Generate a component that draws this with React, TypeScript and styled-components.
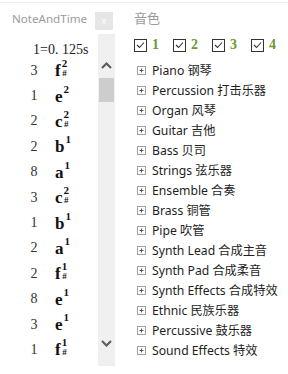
import React from "react";
import styled, { createGlobalStyle } from "styled-components";

const GlobalStyle = createGlobalStyle`
  html, body {
    margin: 0;
    padding: 0;
    background: #ffffff;
  }
`;

const Root = styled.div`
  display: flex;
  width: 288px;
  height: 371px;
  margin-top: 2px;
  border-top: 1px solid #f0f0f0;
  background: #ffffff;
  overflow: hidden;
`;

const LeftPanel = styled.div`
  display: flex;
  flex-direction: column;
  width: 120px;
  flex-shrink: 0;
`;

const LeftHeader = styled.div`
  display: flex;
  align-items: center;
  height: 31px;
  padding-left: 12px;
`;

const HeaderTitle = styled.span`
  font-family: "Noto Sans", sans-serif;
  font-size: 11.6px;
  color: #9b9b9b;
  white-space: nowrap;
`;

const CloseButton = styled.div`
  display: flex;
  flex-shrink: 0;
  align-items: center;
  justify-content: center;
  width: 18px;
  height: 18px;
  margin-left: auto;
  margin-right: 7px;
  margin-top: 4px;
  background: #e6e6e6;
  color: #ffffff;
  font-family: "Noto Sans", sans-serif;
  font-size: 9px;
`;

const LeftBody = styled.div`
  display: flex;
  height: 332px;
`;

const NoteList = styled.div`
  flex: 1;
  padding-top: 8px;
`;

const Unit = styled.div`
  height: 16px;
  line-height: 16px;
  padding-left: 33px;
  font-family: "Liberation Serif", serif;
  font-size: 14px;
  color: #222;
`;

const NoteRow = styled.div`
  display: flex;
  align-items: center;
  height: 25.4px;
`;

const Duration = styled.span`
  width: 12px;
  margin-left: 28px;
  text-align: center;
  font-family: "Liberation Serif", serif;
  font-size: 14px;
  color: #333;
`;

const Pitch = styled.span`
  display: inline-flex;
  align-items: center;
  margin-left: 15px;
`;

const Letter = styled.span`
  font-family: "Liberation Serif", serif;
  font-weight: 700;
  font-size: 17px;
  line-height: 1;
  color: #111;
`;

const Marks = styled.span`
  display: inline-flex;
  flex-direction: column;
  align-items: center;
  margin-left: 1px;
  margin-top: -5px;
  font-family: "Liberation Serif", serif;
  font-weight: 700;
  color: #111;
`;

const Octave = styled.span`
  font-size: 11px;
  line-height: 11px;
`;

const Sharp = styled.span`
  font-size: 9px;
  line-height: 9px;
  height: 9px;
`;

const Scrollbar = styled.div`
  display: flex;
  flex-direction: column;
  width: 17px;
  margin-right: 5px;
  background: #f0f0f0;
`;

const ArrowTop = styled.div`
  display: flex;
  justify-content: center;
  padding-top: 28px;
  height: 16px;
`;

const Thumb = styled.div`
  height: 24px;
  margin: 0 1px;
  background: #cdcdcd;
`;

const ArrowBottom = styled.div`
  display: flex;
  justify-content: center;
  margin-top: auto;
  margin-bottom: 19px;
`;

const RightPanel = styled.div`
  display: flex;
  flex-direction: column;
  flex: 1;
  padding-left: 14px;
`;

const SectionTitle = styled.div`
  height: 30px;
  line-height: 30px;
  font-family: "Noto Sans", "Noto Sans CJK SC", sans-serif;
  font-size: 13px;
  color: #9b9b9b;
`;

const ChannelRow = styled.div`
  display: flex;
  align-items: center;
  height: 24px;
`;

const Channel = styled.label`
  display: flex;
  align-items: center;
  width: 39px;
`;

const Box = styled.span`
  display: flex;
  align-items: center;
  justify-content: center;
  box-sizing: border-box;
  width: 13px;
  height: 13px;
  border: 1px solid #333;
  background: #fff;
`;

const ChannelNum = styled.span`
  margin-left: 5px;
  font-family: "Liberation Serif", serif;
  font-weight: 700;
  font-size: 14px;
  color: #6c9a2c;
`;

const Tree = styled.div`
  margin-top: 3px;
`;

const TreeRow = styled.div`
  display: flex;
  align-items: center;
  height: 20px;
`;

const Expander = styled.span`
  display: flex;
  align-items: center;
  justify-content: center;
  box-sizing: border-box;
  width: 9px;
  height: 9px;
  margin-left: 3px;
  border: 1px solid #a0a0a0;
  background: #fff;
`;

const TreeLabel = styled.span`
  margin-left: 6px;
  font-family: "Noto Sans", "Noto Sans CJK SC", sans-serif;
  font-size: 12.2px;
  color: #1e1e1e;
  white-space: nowrap;
`;

type Note = { dur: number; letter: string; octave: number; sharp?: boolean };

const notes: Note[] = [
  { dur: 3, letter: "f", octave: 2, sharp: true },
  { dur: 1, letter: "e", octave: 2 },
  { dur: 2, letter: "c", octave: 2, sharp: true },
  { dur: 2, letter: "b", octave: 1 },
  { dur: 8, letter: "a", octave: 1 },
  { dur: 3, letter: "c", octave: 2, sharp: true },
  { dur: 1, letter: "b", octave: 1 },
  { dur: 2, letter: "a", octave: 1 },
  { dur: 2, letter: "f", octave: 1, sharp: true },
  { dur: 8, letter: "e", octave: 1 },
  { dur: 3, letter: "e", octave: 1 },
  { dur: 1, letter: "f", octave: 1, sharp: true },
];

const instruments = [
  "Piano 钢琴",
  "Percussion 打击乐器",
  "Organ 风琴",
  "Guitar 吉他",
  "Bass 贝司",
  "Strings 弦乐器",
  "Ensemble 合奏",
  "Brass 铜管",
  "Pipe 吹管",
  "Synth Lead 合成主音",
  "Synth Pad 合成柔音",
  "Synth Effects 合成特效",
  "Ethnic 民族乐器",
  "Percussive 鼓乐器",
  "Sound Effects 特效",
];

const Chevron = ({ up }: { up?: boolean }) => (
  <svg width="11" height="7" viewBox="0 0 11 7">
    <polyline
      points={up ? "1,6 5.5,1.5 10,6" : "1,1 5.5,5.5 10,1"}
      fill="none"
      stroke="#5f5f5f"
      strokeWidth="2.2"
    />
  </svg>
);

const Check = () => (
  <svg width="9" height="8" viewBox="0 0 9 8">
    <polyline points="1,4 3.5,6.5 8,1.5" fill="none" stroke="#333" strokeWidth="1.1" />
  </svg>
);

const Plus = () => (
  <svg width="7" height="7" viewBox="0 0 7 7">
    <path d="M1.5 3.5H5.5M3.5 1.5V5.5" stroke="#555" strokeWidth="1" />
  </svg>
);

const App = () => {
  return (
    <>
      <GlobalStyle />
      <Root>
        <LeftPanel>
          <LeftHeader>
            <HeaderTitle>NoteAndTime</HeaderTitle>
            <CloseButton>x</CloseButton>
          </LeftHeader>
          <LeftBody>
            <NoteList>
              <Unit>1=0. 125s</Unit>
              {notes.map((n, i) => (
                <NoteRow key={i}>
                  <Duration>{n.dur}</Duration>
                  <Pitch>
                    <Letter>{n.letter}</Letter>
                    <Marks>
                      <Octave>{n.octave}</Octave>
                      <Sharp>{n.sharp ? "#" : ""}</Sharp>
                    </Marks>
                  </Pitch>
                </NoteRow>
              ))}
            </NoteList>
            <Scrollbar>
              <ArrowTop>
                <Chevron up />
              </ArrowTop>
              <Thumb />
              <ArrowBottom>
                <Chevron />
              </ArrowBottom>
            </Scrollbar>
          </LeftBody>
        </LeftPanel>
        <RightPanel>
          <SectionTitle>音色</SectionTitle>
          <ChannelRow>
            {[1, 2, 3, 4].map((c) => (
              <Channel key={c}>
                <Box>
                  <Check />
                </Box>
                <ChannelNum>{c}</ChannelNum>
              </Channel>
            ))}
          </ChannelRow>
          <Tree>
            {instruments.map((name) => (
              <TreeRow key={name}>
                <Expander>
                  <Plus />
                </Expander>
                <TreeLabel>{name}</TreeLabel>
              </TreeRow>
            ))}
          </Tree>
        </RightPanel>
      </Root>
    </>
  );
};

export default App;
